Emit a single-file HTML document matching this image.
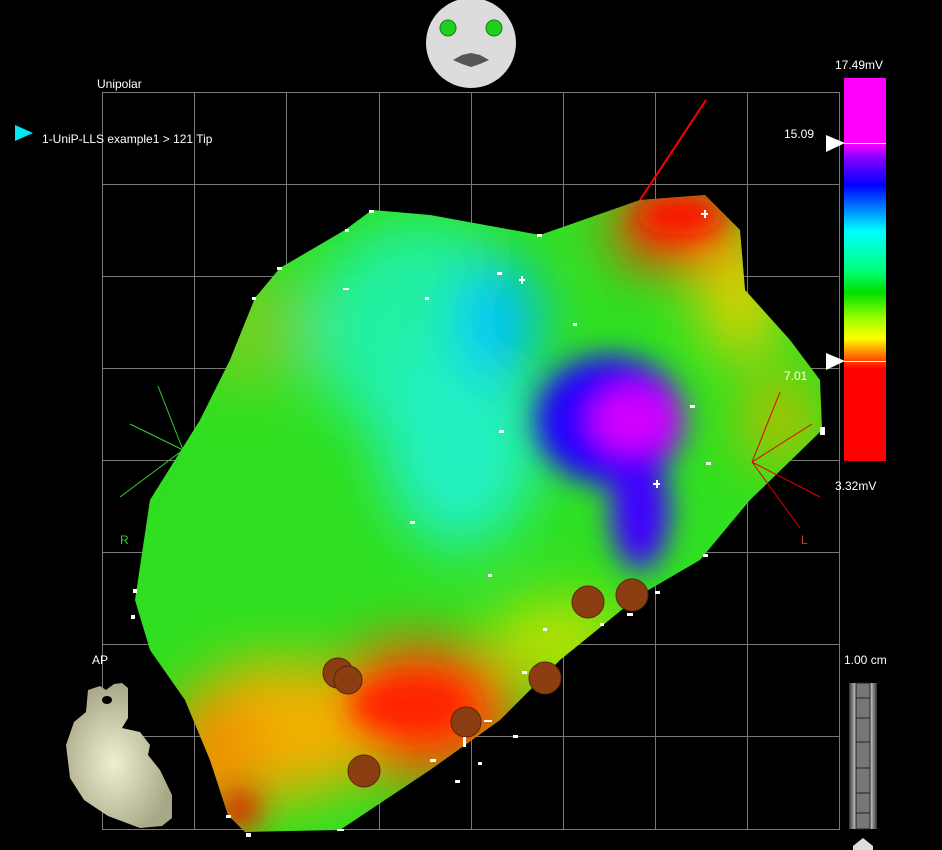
<!DOCTYPE html>
<html><head><meta charset="utf-8"><style>
html,body{margin:0;padding:0;background:#000;width:942px;height:850px;overflow:hidden}
svg{display:block}
text{font-family:"Liberation Sans",sans-serif;fill:#fff;font-size:12px}
</style></head><body>
<svg width="942" height="850" viewBox="0 0 942 850">
<defs>
<linearGradient id="cb" x1="0" y1="0" x2="0" y2="1">
<stop offset="0" stop-color="#ff00ff"/>
<stop offset="0.17" stop-color="#ff00ff"/>
<stop offset="0.21" stop-color="#8000ff"/>
<stop offset="0.28" stop-color="#0000ff"/>
<stop offset="0.4" stop-color="#00ffff"/>
<stop offset="0.5" stop-color="#00ff80"/>
<stop offset="0.56" stop-color="#00e000"/>
<stop offset="0.63" stop-color="#a0ff00"/>
<stop offset="0.68" stop-color="#ffff00"/>
<stop offset="0.72" stop-color="#ff8000"/>
<stop offset="0.76" stop-color="#ff0000"/>
<stop offset="1" stop-color="#ff0000"/>
</linearGradient>
<linearGradient id="sc" x1="0" y1="0" x2="1" y2="0">
<stop offset="0" stop-color="#333"/><stop offset="0.3" stop-color="#eee"/><stop offset="0.7" stop-color="#eee"/><stop offset="1" stop-color="#333"/>
</linearGradient>
<clipPath id="blob"><path d="M372,210 L345,230 L280,268 L255,298 L230,360 L200,420 L150,500 L135,600 L150,650 L185,700 L210,760 L228,815 L245,832 L340,830 L430,770 L500,720 L560,660 L640,595 L700,560 L750,500 L822,430 L820,380 L790,340 L745,290 L740,230 L705,195 L640,200 L540,235 L430,215 Z"/></clipPath>
<filter id="bl" x="-50%" y="-50%" width="200%" height="200%"><feGaussianBlur stdDeviation="28"/></filter>
<filter id="bl2" x="-50%" y="-50%" width="200%" height="200%"><feGaussianBlur stdDeviation="14"/></filter>
<radialGradient id="hs" cx="0.45" cy="0.55" r="0.55"><stop offset="0" stop-color="#f0f0d0"/><stop offset="1" stop-color="#a8a888"/></radialGradient>
</defs>
<g stroke="#7a7a7a" stroke-width="1" fill="none">
<path d="M102.5,92.5H839.5V829.5H102.5Z"/>
<path d="M194.5,92V829M286.5,92V829M379.5,92V829M471.5,92V829M563.5,92V829M655.5,92V829M747.5,92V829"/>
<path d="M102,184.5H839M102,276.5H839M102,368.5H839M102,460.5H839M102,552.5H839M102,644.5H839M102,736.5H839"/>
</g>
<path d="M706,100 L640,200" stroke="#ff0000" stroke-width="2"/>
<g clip-path="url(#blob)">
<rect x="100" y="180" width="740" height="660" fill="#30e020"/>
<g filter="url(#bl)">
<ellipse cx="420" cy="330" rx="110" ry="110" fill="#20f0a0"/>
<ellipse cx="460" cy="440" rx="80" ry="110" fill="#20f0c0"/>
<ellipse cx="500" cy="320" rx="40" ry="60" fill="#00c0ff"/>
<ellipse cx="250" cy="330" rx="60" ry="60" fill="#70d020"/>
<ellipse cx="420" cy="710" rx="100" ry="70" fill="#ff5000"/>
<ellipse cx="280" cy="730" rx="100" ry="70" fill="#f0b000"/>
<ellipse cx="210" cy="760" rx="50" ry="70" fill="#f09000"/>
<ellipse cx="680" cy="230" rx="70" ry="40" fill="#ff3000"/>
<ellipse cx="740" cy="300" rx="40" ry="60" fill="#e0d000"/>
<ellipse cx="780" cy="420" rx="40" ry="50" fill="#b0c000"/>
<ellipse cx="560" cy="640" rx="70" ry="40" fill="#c0e000"/>
</g>
<g filter="url(#bl2)">
<ellipse cx="610" cy="420" rx="75" ry="65" fill="#2000ff"/>
<ellipse cx="635" cy="420" rx="45" ry="35" fill="#d000ff"/>
<ellipse cx="640" cy="510" rx="30" ry="60" fill="#4000ff"/>
<ellipse cx="410" cy="705" rx="60" ry="30" fill="#ff2000"/>
<ellipse cx="680" cy="215" rx="45" ry="20" fill="#ff1000"/>
<ellipse cx="240" cy="810" rx="20" ry="20" fill="#e02000"/>
</g>
</g>
<g fill="#8b3e12" stroke="#5a2508">
<circle cx="338" cy="673" r="15"/><circle cx="348" cy="680" r="14"/>
<circle cx="588" cy="602" r="16"/><circle cx="632" cy="595" r="16"/>
<circle cx="545" cy="678" r="16"/><circle cx="364" cy="771" r="16"/>
<circle cx="466" cy="722" r="15"/>
</g>
<g fill="#fff">
<rect x="369" y="210" width="5" height="3"/><rect x="345" y="229" width="4" height="3"/><rect x="277" y="267" width="5" height="3"/>
<rect x="252" y="297" width="4" height="3"/><rect x="343" y="288" width="6" height="2"/><rect x="425" y="297" width="4" height="3"/>
<rect x="497" y="272" width="5" height="3"/><rect x="519" y="279" width="6" height="2"/><rect x="521" y="276" width="2" height="8"/>
<rect x="537" y="234" width="5" height="3"/><rect x="701" y="213" width="7" height="2"/><rect x="704" y="210" width="2" height="8"/>
<rect x="573" y="323" width="4" height="3"/><rect x="690" y="405" width="5" height="3"/><rect x="499" y="430" width="5" height="3"/>
<rect x="653" y="483" width="7" height="2"/><rect x="656" y="480" width="2" height="8"/><rect x="706" y="462" width="5" height="3"/>
<rect x="410" y="521" width="5" height="3"/><rect x="488" y="574" width="4" height="3"/><rect x="133" y="589" width="4" height="4"/>
<rect x="131" y="615" width="4" height="4"/><rect x="543" y="628" width="4" height="3"/><rect x="627" y="613" width="6" height="3"/>
<rect x="600" y="623" width="4" height="3"/><rect x="655" y="591" width="5" height="3"/><rect x="703" y="554" width="5" height="3"/>
<rect x="522" y="671" width="5" height="3"/><rect x="513" y="735" width="5" height="3"/><rect x="478" y="762" width="4" height="3"/>
<rect x="455" y="780" width="5" height="3"/><rect x="430" y="759" width="6" height="3"/><rect x="337" y="829" width="7" height="2"/>
<rect x="246" y="833" width="5" height="4"/><rect x="226" y="815" width="5" height="3"/><rect x="820" y="427" width="5" height="8"/>
<rect x="484" y="720" width="8" height="2"/><rect x="463" y="737" width="3" height="10"/>
</g>
<g stroke="#30d030" stroke-width="1"><path d="M183,450 L158,386 M183,450 L130,424 M183,450 L120,497 M183,450 L148,522"/></g>
<g stroke="#e00000" stroke-width="1"><path d="M752,462 L780,392 M752,462 L812,424 M752,462 L820,497 M752,462 L800,528"/></g>
<text x="120" y="544" style="fill:#30d030">R</text>
<text x="801" y="544" style="fill:#c04040">L</text>
<circle cx="471" cy="43" r="45" fill="#dcdcdc"/>
<circle cx="448" cy="28" r="8" fill="#20d020" stroke="#158015"/>
<circle cx="494" cy="28" r="8" fill="#20d020" stroke="#158015"/>
<path d="M453,60 L462,55 L471,53 L480,55 L489,60 L480,64 L471,67 L462,64 Z" fill="#555"/>
<text x="97" y="88">Unipolar</text>
<path d="M15,125 L33,133 L15,141 Z" fill="#00e8f0"/>
<text x="42" y="143">1-UniP-LLS example1 &gt; 121 Tip</text>
<rect x="844" y="78" width="42" height="383" fill="url(#cb)"/>
<path d="M844,143.5H886M844,361.5H886" stroke="#fff"/>
<path d="M826,135 L845,143 L826,152 Z M826,353 L845,361 L826,370 Z" fill="#fff"/>
<text x="835" y="69">17.49mV</text>
<text x="784" y="138">15.09</text>
<text x="784" y="380">7.01</text>
<text x="835" y="490">3.32mV</text>
<text x="92" y="664">AP</text>
<path d="M88,690 L100,686 L106,690 L114,684 L122,683 L128,688 L128,718 L122,728 L140,732 L150,745 L148,755 L160,770 L172,795 L172,818 L162,826 L140,828 L108,816 L84,800 L70,778 L66,745 L74,722 L86,712 Z" fill="url(#hs)"/>
<ellipse cx="107" cy="700" rx="5" ry="4" fill="#000"/>
<text x="844" y="664">1.00 cm</text>
<rect x="849" y="683" width="28" height="146" fill="url(#sc)"/>
<rect x="856" y="683" width="14" height="146" fill="#777" stroke="#222"/>
<path d="M856,698H870M856,718H870M856,742H870M856,768H870M856,793H870M856,813H870" stroke="#222"/>
<path d="M853,846 L863,838 L873,846 L873,850 L853,850 Z" fill="#ddd"/>
</svg>
</body></html>
